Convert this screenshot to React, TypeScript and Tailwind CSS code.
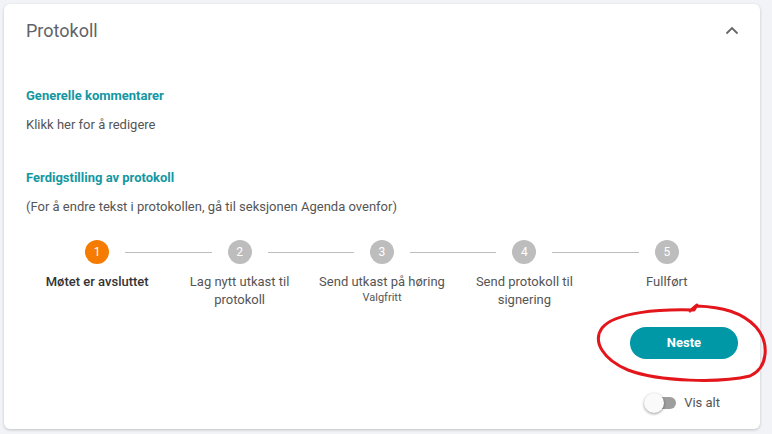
import { useState } from 'react'

const steps = [
  { n: 1, label: 'Møtet er avsluttet', active: true },
  { n: 2, label: 'Lag nytt utkast til protokoll' },
  { n: 3, label: 'Send utkast på høring', optional: 'Valgfritt' },
  { n: 4, label: 'Send protokoll til signering' },
  { n: 5, label: 'Fullført' },
]

function Stepper() {
  return (
    <div className="grid grid-cols-5">
      {steps.map((s, i) => (
        <div key={s.n} className="relative flex flex-col items-center">
          {i > 0 && (
            <div className="absolute top-[12px] left-[calc(-50%+28px)] right-[calc(50%+28px)] h-px bg-[#bdbdbd]" />
          )}
          <div
            className={`flex h-6 w-6 items-center justify-center rounded-full text-[12px] text-white ${
              s.active ? 'bg-[#f57c00]' : 'bg-[#bdbdbd]'
            }`}
          >
            {s.n}
          </div>
          <div
            className={`mt-[9px] px-[6px] text-center text-[13px] leading-[18px] ${
              s.active ? 'font-medium text-[#333]' : 'text-[#555]'
            }`}
          >
            {s.label}
          </div>
          {s.optional && <div className="text-[11px] leading-[14px] text-[#555]">{s.optional}</div>}
        </div>
      ))}
    </div>
  )
}

export default function App() {
  const [showAll, setShowAll] = useState(false)

  return (
    <div className="relative h-[434px] w-[772px] overflow-hidden bg-[#f2f3f7] font-['Roboto',sans-serif]">
      <div className="ml-1 mt-1 h-[425px] w-[756px] rounded-md bg-white px-[22px] pt-[15px] shadow-[0_1px_3px_rgba(0,0,0,0.2)]">
        <div className="flex items-center justify-between">
          <h2 className="text-[18px] leading-6 text-[#5f6368]">Protokoll</h2>
          <svg width="14" height="10" viewBox="0 0 14 10" className="mr-[-1px] text-[#666]">
            <path d="M1.5 7.5L7 2l5.5 5.5" fill="none" stroke="currentColor" strokeWidth="1.8" />
          </svg>
        </div>

        <h3 className="mt-[43px] text-[13px] font-bold leading-5 text-[#1497a3]">Generelle kommentarer</h3>
        <p className="mt-[9px] text-[13px] leading-5 text-[#555]">Klikk her for å redigere</p>

        <h3 className="mt-[33px] text-[13px] font-bold leading-5 text-[#1497a3]">Ferdigstilling av protokoll</h3>
        <p className="mt-[9px] text-[13px] leading-5 text-[#555]">
          (For å endre tekst i protokollen, gå til seksjonen Agenda ovenfor)
        </p>

        <div className="mt-[23px]">
          <Stepper />
        </div>

        <div className="mt-[18px] flex justify-end">
          <button
            type="button"
            className="h-8 w-[108px] rounded-full bg-[#0097a7] text-[13px] font-bold text-white"
          >
            Neste
          </button>
        </div>

        <div className="mt-[34px] flex items-center justify-end pr-[18px]">
          <button
            type="button"
            onClick={() => setShowAll(!showAll)}
            className="relative mr-[6px] h-5 w-[34px]"
          >
            <span className="absolute left-[8px] top-[4px] h-3 w-[24px] rounded-full bg-[#9e9e9e]" />
            <span className="absolute left-0 top-0 h-5 w-5 rounded-full bg-[#fafafa] shadow-[0_1px_3px_rgba(0,0,0,0.4)]" />
          </button>
          <span className="text-[13px] text-[#555]">Vis alt</span>
        </div>
      </div>

      <svg className="pointer-events-none absolute left-0 top-0" width="772" height="434" viewBox="0 0 772 434">
        <path
          d="M690 311 L697 305 L694 310 C660 309 615 312 602 328 C592 342 604 360 628 370 C660 382 720 383 750 376 C768 368 770 343 756 327 C742 312 722 307 697 306"
          fill="none"
          stroke="#e3161c"
          strokeWidth="3"
          strokeLinecap="round"
          strokeLinejoin="round"
        />
      </svg>
    </div>
  )
}
